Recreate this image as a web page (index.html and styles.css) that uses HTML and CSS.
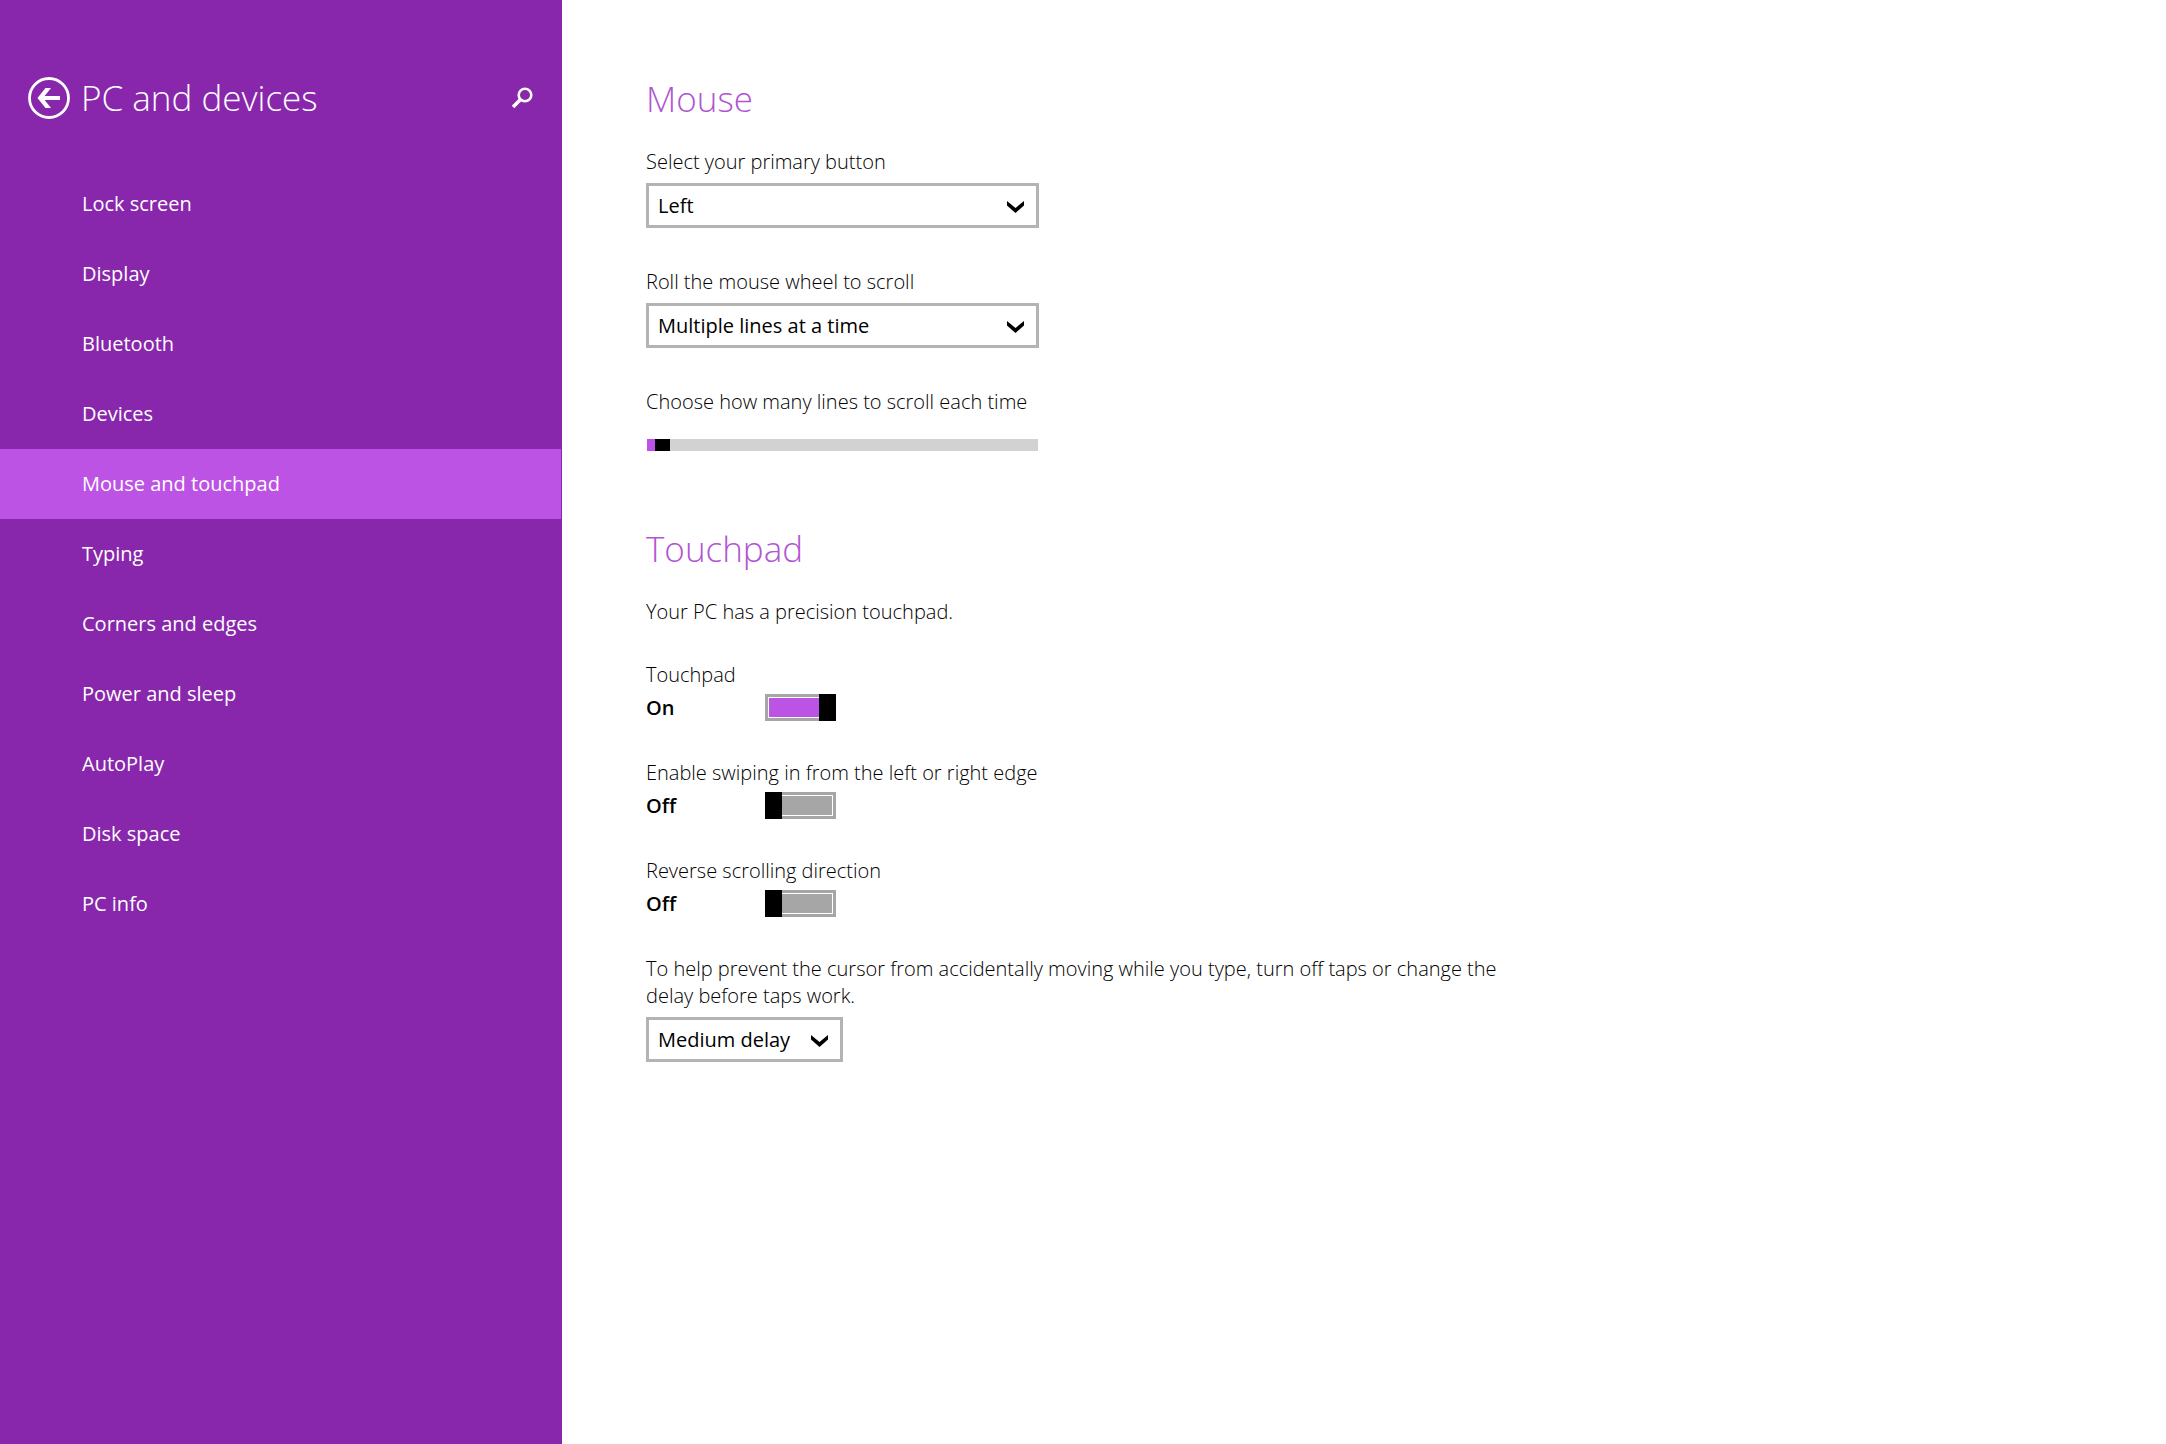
FILE: index.html
```html
<!DOCTYPE html>
<html lang="en">
<head>
  <meta charset="UTF-8" />
  <meta name="viewport" content="width=device-width, initial-scale=1.0" />
  <title>PC and devices</title>
  <link rel="stylesheet" href="styles.css">
</head>
<body>
  <aside class="sidebar">
    <header class="sidebar-header">
      <button class="icon-btn back" aria-label="Back">
        <svg width="42" height="42" viewBox="0 0 42 42" fill="none" stroke="#fff">
          <circle cx="21" cy="21" r="19.5" stroke-width="2.8" />
          <path d="M12 21H32" stroke-width="4" />
          <path d="M23 11h-5.5L9.500 21l8 10H23l-8-10z" fill="#fff" stroke="none" />
        </svg>
      </button>
      <h1>PC and devices</h1>
      <button class="icon-btn search" aria-label="Search">
        <svg width="22" height="22" viewBox="0 0 22 22" fill="none" stroke="#fff">
          <circle cx="14" cy="8" r="6.300" stroke-width="2.600" />
          <path d="M9.500 12.500L2 20" stroke-width="3.600" />
        </svg>
      </button>
    </header>
    <nav>
      <a href="#">Lock screen</a>
      <a href="#">Display</a>
      <a href="#">Bluetooth</a>
      <a href="#">Devices</a>
      <a href="#" class="active" aria-current="page">Mouse and touchpad</a>
      <a href="#">Typing</a>
      <a href="#">Corners and edges</a>
      <a href="#">Power and sleep</a>
      <a href="#">AutoPlay</a>
      <a href="#">Disk space</a>
      <a href="#">PC info</a>
    </nav>
  </aside>

  <main>
    <section>
      <h2>Mouse</h2>
      <div class="field">
        <label for="primary-button">Select your primary button</label>
        <div class="select">
          <select id="primary-button">
            <option>Left</option>
            <option>Right</option>
          </select>
          <svg width="17" height="12" viewBox="0 0 17 12"><path d="M0 0L8.500 7L17 0V4.500L8.500 12L0 4.500z" /></svg>
        </div>
      </div>
      <div class="field">
        <label for="wheel">Roll the mouse wheel to scroll</label>
        <div class="select">
          <select id="wheel">
            <option>Multiple lines at a time</option>
            <option>One screen at a time</option>
          </select>
          <svg width="17" height="12" viewBox="0 0 17 12"><path d="M0 0L8.500 7L17 0V4.500L8.500 12L0 4.500z" /></svg>
        </div>
      </div>
      <div class="field">
        <label for="lines">Choose how many lines to scroll each time</label>
        <input type="range" id="lines" min="1" max="100" value="3" />
      </div>
    </section>

    <section>
      <h2>Touchpad</h2>
      <p class="intro">Your PC has a precision touchpad.</p>
      <div class="toggle">
        <label for="touchpad">Touchpad</label>
        <div class="toggle-row">
          <span>On</span>
          <input type="checkbox" id="touchpad" checked />
        </div>
      </div>
      <div class="toggle">
        <label for="swipe">Enable swiping in from the left or right edge</label>
        <div class="toggle-row">
          <span>Off</span>
          <input type="checkbox" id="swipe" />
        </div>
      </div>
      <div class="toggle">
        <label for="reverse">Reverse scrolling direction</label>
        <div class="toggle-row">
          <span>Off</span>
          <input type="checkbox" id="reverse" />
        </div>
      </div>
      <div class="field">
        <label for="delay">To help prevent the cursor from accidentally moving while you type, turn off taps or change the delay before taps work.</label>
        <div class="select small">
          <select id="delay">
            <option>Medium delay</option>
            <option>Short delay</option>
            <option>Long delay</option>
          </select>
          <svg width="17" height="12" viewBox="0 0 17 12"><path d="M0 0L8.500 7L17 0V4.500L8.500 12L0 4.500z" /></svg>
        </div>
      </div>
    </section>
  </main>

  <script>
    document.querySelectorAll('.toggle input').forEach((box) => {
      box.onchange = () => {
        box.previousElementSibling.textContent = box.checked ? 'On' : 'Off';
      };
    });
  </script>
</body>
</html>
```

FILE: styles.css
```css
:root {
  --purple: #8827ab;
  --accent: #bd53e5;
  --heading: #b055d2;
  --border: #b3b3b3;
  --gray: #a6a6a6;
}
* { box-sizing: border-box; }
body {
  margin: 0;
  min-height: 100vh;
  display: flex;
  font-family: "Open Sans", "Segoe UI", sans-serif;
  font-size: 20px;
  line-height: 27px;
  color: #000;
  background: #fff;
}
h1, h2 {
  margin: 0;
  font-size: 35px;
  line-height: 48px;
  font-weight: 300;
}

/* Sidebar */
.sidebar {
  flex: 0 0 562px;
  background: var(--purple);
  border-right: 1px solid var(--purple);
  color: #fff;
}
.sidebar-header {
  display: flex;
  align-items: center;
  padding: 74px 28px 0;
  margin-bottom: 47px;
}
.sidebar-header h1 {
  flex: 1;
  margin-left: 11px;
}
.icon-btn {
  display: flex;
  padding: 0;
  border: 0;
  background: none;
  cursor: pointer;
}
nav a {
  display: block;
  padding-left: 82px;
  line-height: 70px;
  color: #fff;
  text-decoration: none;
}
nav a.active {
  background: var(--accent);
}

/* Settings */
main {
  flex: 1;
  padding: 75px 84px;
}
section {
  max-width: 860px;
  margin-bottom: 74px;
}
h2 {
  color: var(--heading);
  margin-bottom: 25px;
}
.field {
  margin-bottom: 40px;
}
label {
  display: block;
  font-weight: 300;
}
.select {
  position: relative;
  width: 393px;
  margin-top: 8px;
}
.select.small {
  width: 197px;
}
.select select {
  appearance: none;
  display: block;
  width: 100%;
  height: 45px;
  padding: 0 40px 0 9px;
  border: 3px solid var(--border);
  border-radius: 0;
  background: #fff;
  color: #000;
  font: inherit;
}
.select svg {
  position: absolute;
  right: 15px;
  top: 18px;
  pointer-events: none;
}
input[type="range"] {
  appearance: none;
  display: block;
  width: 391px;
  height: 12px;
  margin: 24px 0 0 1px;
  background: linear-gradient(to right, var(--accent) 12px, #d2d2d2 12px);
}
input[type="range"]::-webkit-slider-thumb {
  appearance: none;
  width: 15px;
  height: 12px;
  background: #000;
}
.intro {
  margin: 0 0 36px;
  font-weight: 300;
}
.toggle {
  margin-bottom: 38px;
}
.toggle-row {
  display: flex;
  margin-top: 6px;
  font-weight: 600;
}
.toggle-row span {
  width: 119px;
}
.toggle input {
  appearance: none;
  display: flex;
  width: 71px;
  height: 27px;
  margin: 0;
  border: 3px solid var(--gray);
  background: var(--gray);
  box-shadow: inset 0 0 0 1px #fff;
}
.toggle input::before {
  content: "";
  width: 17px;
  height: 27px;
  margin: -3px;
  background: #000;
}
.toggle input:checked {
  justify-content: flex-end;
  background: var(--accent);
}
section:last-child, section .field:last-child {
  margin-bottom: 0;
}
```
